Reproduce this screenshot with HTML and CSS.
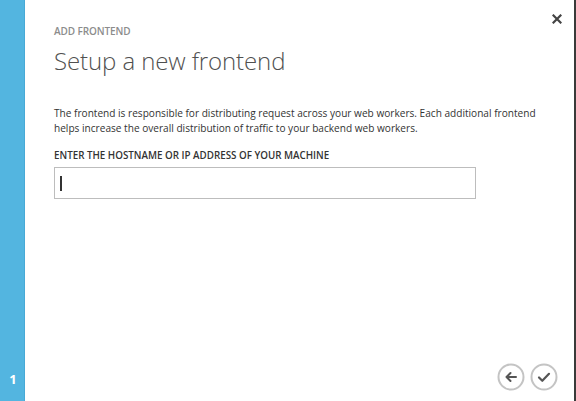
FILE: index.html
```html
<!DOCTYPE html>
<html>
<head>
<meta charset="utf-8">
<link rel="stylesheet" href="styles.css">
</head>
<body>
<div class="dialog">
  <aside class="sidebar">
    <span class="step">1</span>
  </aside>
  <main class="content">
    <div class="body">
      <div class="eyebrow">ADD FRONTEND</div>
      <h1 class="title">Setup a new frontend</h1>
      <p class="desc">The frontend is responsible for distributing request across your web workers. Each additional frontend helps increase the overall distribution of traffic to your backend web workers.</p>
      <label class="field-label">ENTER THE HOSTNAME OR IP ADDRESS OF YOUR MACHINE</label>
      <div class="input"><span class="caret"></span></div>
    </div>
    <div class="footer">
      <button class="circle" aria-label="Back">
        <svg width="28" height="28" viewBox="0 0 28 28"><circle cx="14" cy="14" r="12.5" fill="none" stroke="#c4c4c4" stroke-width="2"/><path d="M19 14H9.5M13.5 10l-4 4 4 4" fill="none" stroke="#555" stroke-width="2" stroke-linecap="round" stroke-linejoin="round"/></svg>
      </button>
      <button class="circle" aria-label="Finish">
        <svg width="28" height="28" viewBox="0 0 28 28"><circle cx="14" cy="14" r="12.5" fill="none" stroke="#c4c4c4" stroke-width="2"/><path d="M9 14.5l3.3 3.3 6.7-7" fill="none" stroke="#555" stroke-width="2.2" stroke-linecap="round" stroke-linejoin="round"/></svg>
      </button>
    </div>
    <button class="close" aria-label="Close">
      <svg width="10" height="10" viewBox="0 0 10 10"><path d="M1.5 1.5l7 7M8.5 1.5l-7 7" stroke="#444" stroke-width="2.2" stroke-linecap="square"/></svg>
    </button>
  </main>
</div>
</body>
</html>
```

FILE: styles.css
```css
html, body {
  margin: 0;
  padding: 0;
  background: #fff;
}
body {
  font-family: "Open Sans", "Noto Sans", sans-serif;
  color: #333;
}
.dialog {
  display: flex;
  width: 576px;
  height: 401px;
  box-sizing: border-box;
  border-right: 2px solid #3a3a3a;
}
.sidebar {
  width: 25px;
  background: #53b5e0;
  border-right: 1px solid #48a9d6;
  display: flex;
  flex-direction: column;
  justify-content: flex-end;
  align-items: center;
  padding-bottom: 14px;
  box-sizing: border-box;
}
.step {
  color: #fff;
  font-weight: 700;
  font-size: 13px;
  line-height: 16px;
  margin-left: 2px;
}
.content {
  flex: 1;
  position: relative;
  display: flex;
  flex-direction: column;
  justify-content: space-between;
  padding: 24px 0 10px 29px;
}
.eyebrow {
  font-size: 10px;
  font-weight: 600;
  color: #8c8c8c;
  letter-spacing: -0.1px;
  line-height: 14px;
}
.title {
  margin: 9px 0 0 0;
  font-size: 24px;
  font-weight: 300;
  color: #505050;
  line-height: 28px;
  letter-spacing: -0.1px;
}
.desc {
  margin: 31px 0 0 0;
  font-size: 10.1px;
  line-height: 15px;
  color: #333;
  width: 490px;
}
.field-label {
  display: block;
  margin-top: 13px;
  font-size: 9.8px;
  font-weight: 600;
  color: #333;
  line-height: 14px;
}
.input {
  box-sizing: border-box;
  margin-top: 4px;
  width: 422px;
  height: 32px;
  border: 1px solid #bdbdbd;
  display: flex;
  align-items: center;
  padding-left: 5px;
}
.caret {
  width: 1.5px;
  height: 15px;
  background: #333;
}
.footer {
  display: flex;
  justify-content: flex-end;
  gap: 5px;
  padding-right: 16px;
}
.circle {
  border: 0;
  background: none;
  padding: 0;
  width: 28px;
  height: 28px;
  display: block;
}
.circle svg { display: block; }
.close {
  position: absolute;
  top: 14px;
  right: 12px;
  border: 0;
  background: none;
  padding: 0;
  width: 10px;
  height: 10px;
}
.close svg { display: block; }
```
